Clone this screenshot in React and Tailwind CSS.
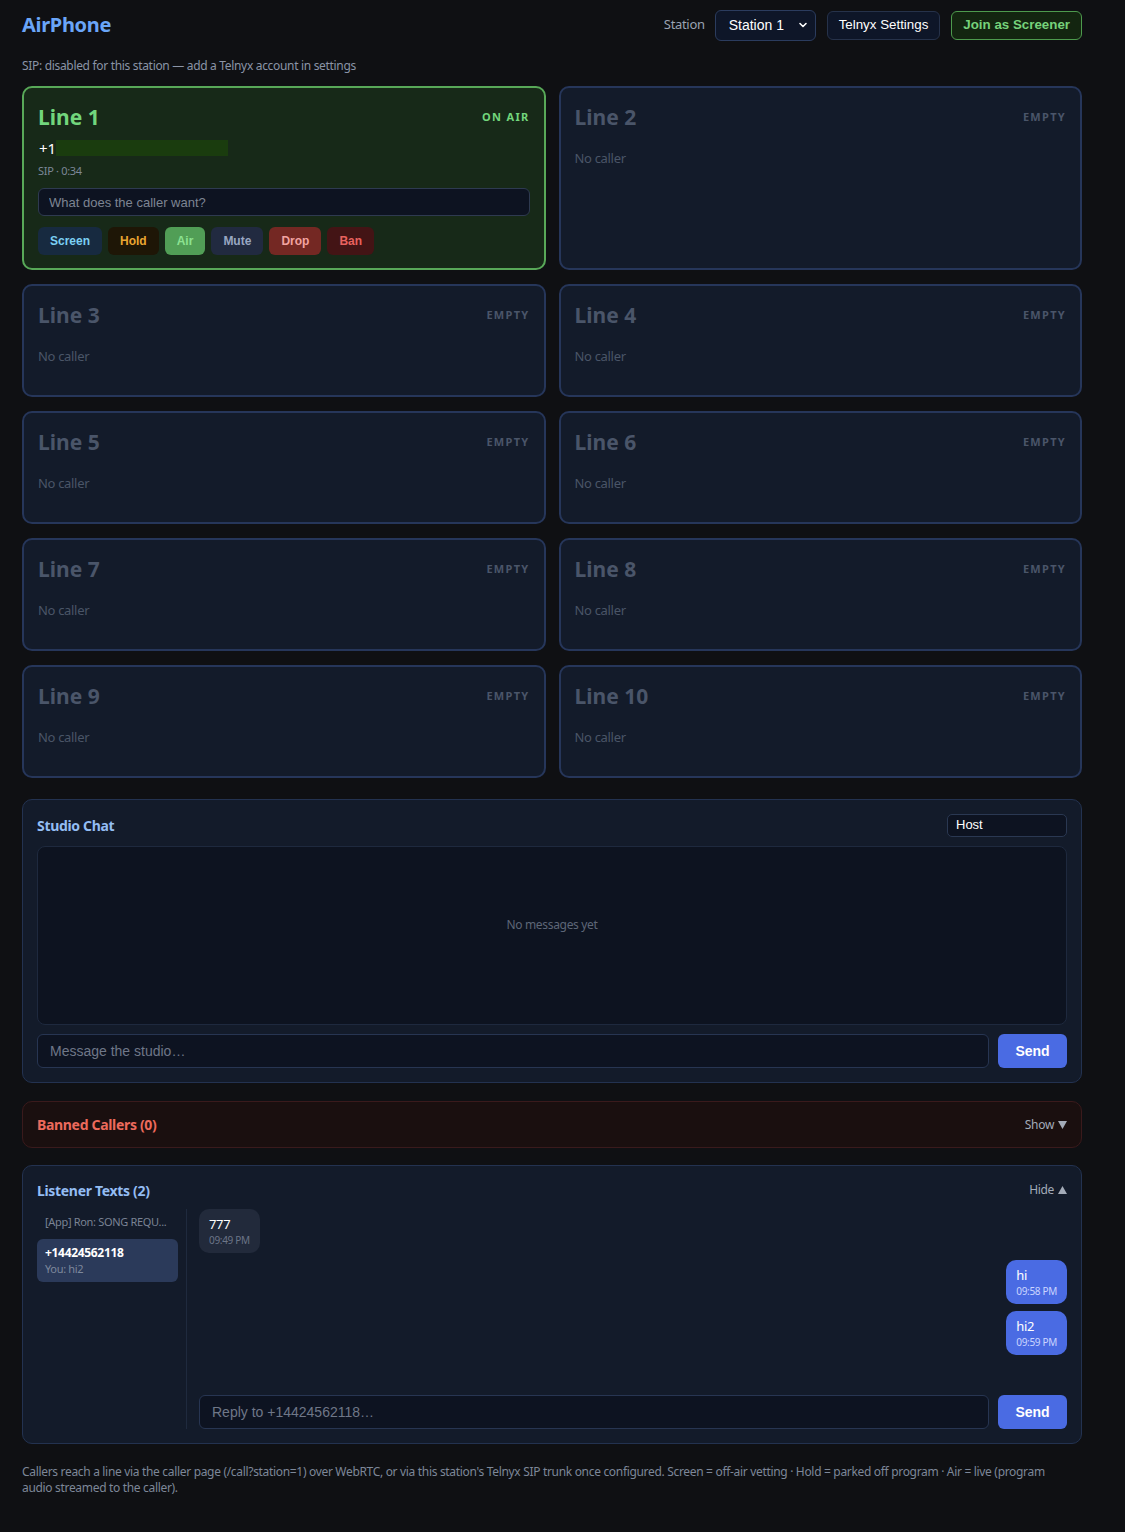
import React from 'react';

const SANS = "font-['Noto_Sans','Open_Sans',sans-serif] tracking-[-0.02em]";
const CTRL = "font-['Liberation_Sans',Arial,sans-serif] tracking-normal";

const lines = [2, 3, 4, 5, 6, 7, 8, 9, 10];

const Chevron = () => (
  <svg width="12" height="12" viewBox="0 0 24 24" fill="none" stroke="currentColor" strokeWidth="3.2" strokeLinecap="round" strokeLinejoin="round">
    <path d="M6 9l6 6 6-6" />
  </svg>
);

const Triangle = ({ up }) => (
  <svg width="9" height="8" viewBox="0 0 9 8" className="ml-[4px]" fill="currentColor">
    <path d={up ? 'M4.5 0L9 8H0z' : 'M0 0h9L4.5 8z'} />
  </svg>
);

const EmptyLine = ({ n }) => (
  <div className="min-h-[113px] rounded-[10px] border-2 border-[#26365a] bg-[#131b2a] px-[14px] pt-[14px]">
    <div className="flex items-center justify-between">
      <h3 className="text-[21px] font-bold leading-[30px] tracking-normal text-[#4a5569]">Line {n}</h3>
      <span className="text-[11px] font-bold tracking-[1.3px] text-[#4a5569]">EMPTY</span>
    </div>
    <p className="mt-[17px] text-[13px] leading-[18px] text-[#4a5567]">No caller</p>
  </div>
);

const ActionButton = ({ label, className }) => (
  <button className={`${CTRL} h-[28px] rounded-[6px] px-[12px] text-[12px] font-bold ${className}`}>{label}</button>
);

const OnAirLine = () => (
  <div className="rounded-[10px] border-2 border-[#58a858] bg-[#172918] px-[14px] pt-[14px] pb-[13px]">
    <div className="flex items-center justify-between">
      <h3 className="text-[21px] font-bold leading-[30px] tracking-normal text-[#72d67c]">Line 1</h3>
      <span className="text-[11px] font-bold tracking-[1.3px] text-[#72d67c]">ON AIR</span>
    </div>
    <div className="mt-[6px] flex h-[20px] items-center text-[15px] tracking-normal text-white">
      <span className="pl-px">+1</span>
      <span className="h-[16px] w-[172px] bg-[#1a3c0e]" />
    </div>
    <p className="mt-[5px] text-[11px] leading-[16px] text-[#7c8797]">SIP · 0:34</p>
    <input
      className={`${CTRL} mt-[9px] h-[28px] w-full rounded-[6px] border border-[#2e3a50] bg-[#0d1321] px-[10px] text-[13px] text-white placeholder:text-[#7d8593] outline-none`}
      placeholder="What does the caller want?"
    />
    <div className="mt-[11px] flex gap-[6px]">
      <ActionButton label="Screen" className="bg-[#172a40] text-[#7cd0f4]" />
      <ActionButton label="Hold" className="bg-[#1e1606] text-[#eaa531]" />
      <ActionButton label="Air" className="bg-[#519e56] text-[#8ce291]" />
      <ActionButton label="Mute" className="bg-[#212a40] text-[#98a6c2]" />
      <ActionButton label="Drop" className="bg-[#742823] text-[#f2a3a0]" />
      <ActionButton label="Ban" className="bg-[#431415] text-[#e8625f]" />
    </div>
  </div>
);

const SendButton = () => (
  <button className={`${CTRL} h-[34px] w-[69px] rounded-[6px] bg-[#4a6be3] text-[14px] font-bold text-white`}>Send</button>
);

const TextInput = ({ placeholder }) => (
  <input
    className={`${CTRL} h-[34px] flex-1 rounded-[6px] border border-[#273552] bg-[#0d1321] px-[12px] text-[14px] text-white placeholder:text-[#6f7788] outline-none`}
    placeholder={placeholder}
  />
);

const StudioChat = () => (
  <section className="rounded-[10px] border border-[#233250] bg-[#131b2a] px-[14px] pt-[14px] pb-[14px]">
    <div className="flex h-[22px] items-center justify-between">
      <h2 className="text-[14px] font-bold text-[#93bdf3]">Studio Chat</h2>
      <div className={`${CTRL} flex h-[23px] w-[120px] items-center rounded-[5px] border border-[#2a3852] bg-[#0d1321] px-[8px] text-[13px] text-white`}>
        Host
      </div>
    </div>
    <div className="mt-[10px] flex h-[179px] justify-center rounded-[8px] border border-[#1e293e] bg-[#0d1320] pt-[70px]">
      <span className="text-[12px] leading-[16px] text-[#5d6677]">No messages yet</span>
    </div>
    <div className="mt-[9px] flex gap-[9px]">
      <TextInput placeholder="Message the studio…" />
      <SendButton />
    </div>
  </section>
);

const BannedCallers = () => (
  <section className="flex h-[47px] items-center justify-between rounded-[10px] border border-[#3a1a1c] bg-[#1a0f0f] px-[14px]">
    <h2 className="text-[14px] font-bold text-[#ec6a5c]">Banned Callers (0)</h2>
    <span className="flex items-center text-[12px] text-[#a3abb8]">
      Show
      <Triangle />
    </span>
  </section>
);

const Bubble = ({ text, time, mine }) => (
  <div
    className={`rounded-[10px] px-[10px] pt-[6px] pb-[5px] ${
      mine ? 'self-end bg-[#4a6be3]' : 'self-start bg-[#222a3b]'
    }`}
  >
    <p className="text-[13px] leading-[18px] text-white">{text}</p>
    <p className={`text-[10px] leading-[15px] ${mine ? 'text-[#cbd6ff]' : 'text-[#6c7588]'}`}>{time}</p>
  </div>
);

const ListenerTexts = () => (
  <section className="rounded-[10px] border border-[#233250] bg-[#131b2a] px-[14px] pt-[13px] pb-[14px]">
    <div className="flex h-[22px] items-center justify-between">
      <h2 className="text-[14px] font-bold text-[#93bdf3]">Listener Texts (2)</h2>
      <span className="flex items-center text-[12px] text-[#a3abb8]">
        Hide
        <Triangle up />
      </span>
    </div>
    <div className="mt-[8px] flex h-[220px]">
      <div className="w-[150px] border-r border-[#1f2a3e] pr-[8px]">
        <div className="px-[8px] py-[5px]">
          <p className="whitespace-nowrap text-[11px] leading-[16px] text-[#7a8394]">[App] Ron: SONG REQU...</p>
        </div>
        <div className="mt-[4px] rounded-[6px] bg-[#2b3a5a] px-[8px] py-[6px]">
          <p className="text-[12px] font-bold leading-[16px] text-white">+14424562118</p>
          <p className="text-[11px] leading-[15px] text-[#7d889c]">You: hi2</p>
        </div>
      </div>
      <div className="ml-[12px] flex flex-1 flex-col">
        <div className="flex flex-1 flex-col gap-[7px]">
          <Bubble text="777" time="09:49 PM" />
          <Bubble text="hi" time="09:58 PM" mine />
          <Bubble text="hi2" time="09:59 PM" mine />
        </div>
        <div className="flex gap-[9px]">
          <TextInput placeholder="Reply to +14424562118…" />
          <SendButton />
        </div>
      </div>
    </div>
  </section>
);

export default function App() {
  return (
    <div className={`${SANS} min-h-[1532px] bg-[#0f1013] px-[22px] pt-[10px] pb-[30px]`}>
      <div className="w-[1060px]">
        {/* top bar */}
        <header className="flex h-[30px] items-center justify-between">
          <h1 className="text-[20px] font-bold text-[#6aa5f8]">AirPhone</h1>
          <div className="flex items-center">
            <span className="mr-[10px] text-[13px] text-[#9aa3b2]">Station</span>
            <div className={`${CTRL} flex h-[31px] w-[101px] items-center justify-between rounded-[6px] border border-[#2b3c5e] bg-[#0e1628] pl-[13px] pr-[6px] text-[14px] text-white`}>
              Station 1
              <Chevron />
            </div>
            <button className={`${CTRL} ml-[11px] h-[29px] rounded-[6px] border border-[#26324a] bg-[#0e1628] px-[11px] text-[13.33px] text-white`}>
              Telnyx Settings
            </button>
            <button className={`${CTRL} ml-[11px] h-[29px] rounded-[6px] border border-[#4d9a4d] bg-[#132510] px-[11px] text-[13.33px] font-bold text-[#76d27b]`}>
              Join as Screener
            </button>
          </div>
        </header>

        <p className="mt-[18px] text-[12px] leading-[16px] text-[#8a94a6]">
          SIP: disabled for this station — add a Telnyx account in settings
        </p>

        {/* lines */}
        <div className="mt-[12px] grid grid-cols-2 gap-x-[13px] gap-y-[14px]">
          <OnAirLine />
          {lines.map((n) => (
            <EmptyLine key={n} n={n} />
          ))}
        </div>

        <div className="mt-[21px] flex flex-col">
          <StudioChat />
          <div className="mt-[18px]">
            <BannedCallers />
          </div>
          <div className="mt-[17px]">
            <ListenerTexts />
          </div>
        </div>

        <p className="mt-[20px] pr-[20px] text-[12px] leading-[16px] text-[#7d8798]">
          Callers reach a line via the caller page (/call?station=1) over WebRTC, or via this station's Telnyx SIP trunk once configured. Screen = off-air vetting · Hold = parked off program · Air = live (program audio streamed to the caller).
        </p>
      </div>
    </div>
  );
}
